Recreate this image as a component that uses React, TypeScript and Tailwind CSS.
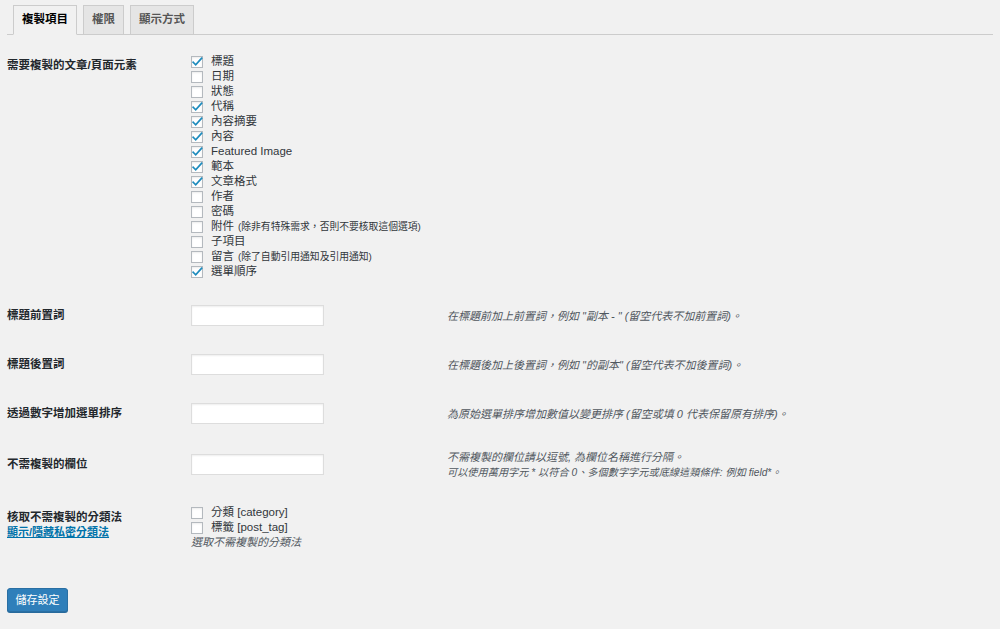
import React from "react";

type Item = { label: string; checked: boolean; note?: string };

const items: Item[] = [
  { label: "標題", checked: true },
  { label: "日期", checked: false },
  { label: "狀態", checked: false },
  { label: "代稱", checked: true },
  { label: "內容摘要", checked: true },
  { label: "內容", checked: true },
  { label: "Featured Image", checked: true },
  { label: "範本", checked: true },
  { label: "文章格式", checked: true },
  { label: "作者", checked: false },
  { label: "密碼", checked: false },
  { label: "附件", checked: false, note: "(除非有特殊需求，否則不要核取這個選項)" },
  { label: "子項目", checked: false },
  { label: "留言", checked: false, note: "(除了自動引用通知及引用通知)" },
  { label: "選單順序", checked: true },
];

function Box({ checked }: { checked: boolean }) {
  return (
    <span className="flex h-[12px] w-[12px] shrink-0 items-center justify-center border border-[#b4b9be] bg-white shadow-[inset_0_1px_2px_rgba(0,0,0,0.08)]">
      {checked && (
        <svg viewBox="0 0 12 12" className="h-[12px] w-[12px] overflow-visible">
          <path d="M2.2 6.3 L4.7 8.8 L10.6 2.2" fill="none" stroke="#1e8cbe" strokeWidth="1.7" strokeLinecap="square" />
        </svg>
      )}
    </span>
  );
}

function CheckRow({ item }: { item: Item }) {
  return (
    <div className="flex h-[15px] items-center">
      <Box checked={item.checked} />
      <span className="ml-[8px] text-[11.5px] leading-[15px] text-[#32373c]">{item.label}</span>
      {item.note && <span className="ml-[4px] text-[9.8px] leading-[15px] text-[#32373c]">{item.note}</span>}
    </div>
  );
}

function InputRow({ label, desc, tall }: { label: string; desc: React.ReactNode; tall?: boolean }) {
  return (
    <div className={`flex items-center ${tall ? "h-[53px]" : "h-[49px]"}`}>
      <div className="w-[184px] text-[11.5px] font-bold leading-[15px] text-[#23282d]">{label}</div>
      <div className="w-[256px]">
        <div className="h-[21px] w-[133px] border border-[#dddddd] bg-white shadow-[inset_0_1px_2px_rgba(0,0,0,0.07)]" />
      </div>
      <div className="text-[11px] italic leading-[16px] text-[#50575e]">{desc}</div>
    </div>
  );
}

export default function App() {
  return (
    <div className="min-h-[629px] w-full bg-[#f1f1f1] font-['Liberation_Sans','Noto_Sans_CJK_TC',sans-serif] text-[#444]">
      <div className="px-[7px]">
        <div className="flex items-end gap-[6px] border-b border-[#cccccc] pl-[6px] pt-[5px]">
          <div className="-mb-px flex h-[30px] items-center border border-[#cccccc] border-b-[#f1f1f1] bg-[#f1f1f1] px-[8px] text-[11.5px] font-bold text-[#000]">
            複製項目
          </div>
          <div className="-mb-px flex h-[30px] items-center border border-[#cccccc] bg-[#e5e5e5] px-[8px] text-[11.5px] font-bold text-[#555]">
            權限
          </div>
          <div className="-mb-px flex h-[30px] items-center border border-[#cccccc] bg-[#e5e5e5] px-[8px] text-[11.5px] font-bold text-[#555]">
            顯示方式
          </div>
        </div>

        <div className="flex pt-[19px]">
          <div className="w-[184px] pt-[4px] text-[11.5px] font-bold leading-[15px] text-[#23282d]">
            需要複製的文章/頁面元素
          </div>
          <div className="flex flex-col">
            {items.map((it) => (
              <CheckRow key={it.label} item={it} />
            ))}
          </div>
        </div>

        <div className="mt-[12px] flex flex-col">
          <InputRow label="標題前置詞" desc={'在標題前加上前置詞，例如 "副本 - " (留空代表不加前置詞)。'} />
          <InputRow label="標題後置詞" desc={'在標題後加上後置詞，例如 "的副本" (留空代表不加後置詞)。'} />
          <InputRow label="透過數字增加選單排序" desc="為原始選單排序增加數值以變更排序 (留空或填 0 代表保留原有排序)。" />
          <InputRow
            tall
            label="不需複製的欄位"
            desc={
              <>
                <div>不需複製的欄位請以逗號, 為欄位名稱進行分隔。</div>
                <div className="text-[10.2px]">可以使用萬用字元 * 以符合 0、多個數字字元或底線這類條件: 例如 field*。</div>
              </>
            }
          />
        </div>

        <div className="flex pt-[14px]">
          <div className="w-[184px] pt-[5px] text-[11.5px] font-bold leading-[15px] text-[#23282d]">
            <div>核取不需複製的分類法</div>
            <a href="#" className="text-[11px] text-[#0073aa] underline">
              顯示/隱藏私密分類法
            </a>
          </div>
          <div className="flex flex-col">
            <CheckRow item={{ label: "分類 [category]", checked: false }} />
            <CheckRow item={{ label: "標籤 [post_tag]", checked: false }} />
            <div className="text-[11px] italic leading-[15px] text-[#50575e]">選取不需複製的分類法</div>
          </div>
        </div>

        <div className="mt-[38px]">
          <button className="flex h-[24px] w-[61px] items-center justify-center rounded-[3px] border border-[#2a6fa3] bg-[#2f7fba] text-[11px] text-white shadow-[0_1px_0_#276a9c]">
            儲存設定
          </button>
        </div>
      </div>
    </div>
  );
}
